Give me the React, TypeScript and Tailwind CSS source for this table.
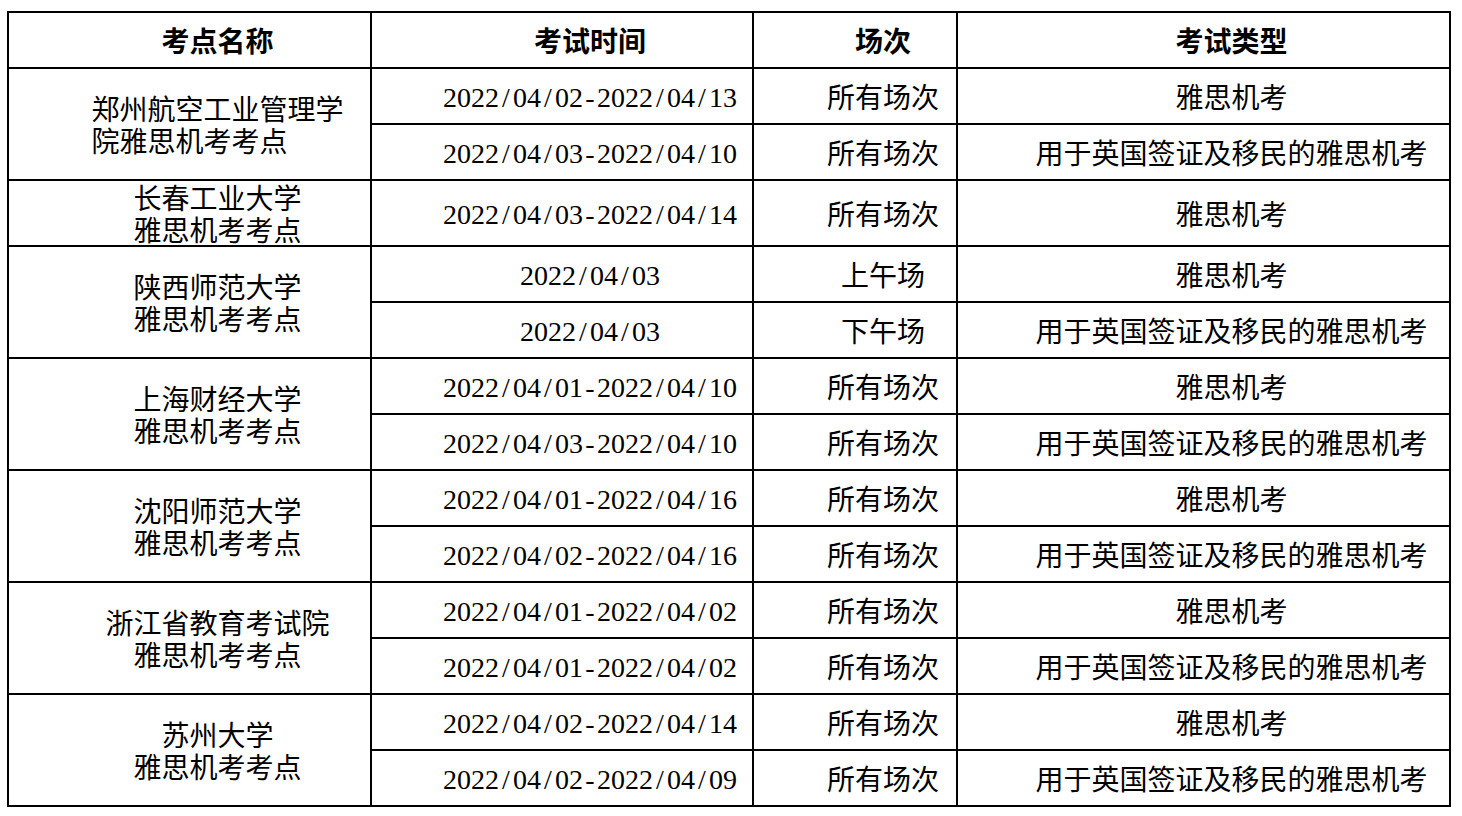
type Slot = { date: string; session: string; type: string };

interface Venue {
  name: string[];
  leftAligned?: boolean;
  tall?: boolean;
  slots: Slot[];
}

const VISA = '用于英国签证及移民的雅思机考';
const IELTS = '雅思机考';
const ALL = '所有场次';

const venues: Venue[] = [
  {
    name: ['郑州航空工业管理学', '院雅思机考考点'],
    leftAligned: true,
    slots: [
      { date: '2022/04/02-2022/04/13', session: ALL, type: IELTS },
      { date: '2022/04/03-2022/04/10', session: ALL, type: VISA },
    ],
  },
  {
    name: ['长春工业大学', '雅思机考考点'],
    tall: true,
    slots: [{ date: '2022/04/03-2022/04/14', session: ALL, type: IELTS }],
  },
  {
    name: ['陕西师范大学', '雅思机考考点'],
    slots: [
      { date: '2022/04/03', session: '上午场', type: IELTS },
      { date: '2022/04/03', session: '下午场', type: VISA },
    ],
  },
  {
    name: ['上海财经大学', '雅思机考考点'],
    slots: [
      { date: '2022/04/01-2022/04/10', session: ALL, type: IELTS },
      { date: '2022/04/03-2022/04/10', session: ALL, type: VISA },
    ],
  },
  {
    name: ['沈阳师范大学', '雅思机考考点'],
    slots: [
      { date: '2022/04/01-2022/04/16', session: ALL, type: IELTS },
      { date: '2022/04/02-2022/04/16', session: ALL, type: VISA },
    ],
  },
  {
    name: ['浙江省教育考试院', '雅思机考考点'],
    slots: [
      { date: '2022/04/01-2022/04/02', session: ALL, type: IELTS },
      { date: '2022/04/01-2022/04/02', session: ALL, type: VISA },
    ],
  },
  {
    name: ['苏州大学', '雅思机考考点'],
    slots: [
      { date: '2022/04/02-2022/04/14', session: ALL, type: IELTS },
      { date: '2022/04/02-2022/04/09', session: ALL, type: VISA },
    ],
  },
];

// half-width glyphs laid out on a fixed pitch, like the original document font
function MonoText({ text }: { text: string }) {
  return (
    <span className="inline-block whitespace-nowrap font-['Liberation_Serif',serif] text-[28px]">
      {text.split('').map((ch, i) => (
        <span key={i} className="inline-block w-[14px] text-center">
          {ch}
        </span>
      ))}
    </span>
  );
}

const cell = 'border-2 border-black pl-[56px] pr-0 text-center align-middle';

export default function App() {
  return (
    <div className="min-h-screen bg-white pt-[11px] pl-[7px] font-['Noto_Sans_CJK_SC',sans-serif] text-[28px] leading-8 text-black">
      <table className="w-[1444px] table-fixed border-collapse">
        <colgroup>
          <col className="w-[363px]" />
          <col className="w-[382px]" />
          <col className="w-[204px]" />
          <col className="w-[493px]" />
        </colgroup>
        <thead>
          <tr className="h-[56px]">
            <th className={`${cell} font-bold`}>考点名称</th>
            <th className={`${cell} font-bold`}>考试时间</th>
            <th className={`${cell} font-bold`}>场次</th>
            <th className={`${cell} font-bold`}>考试类型</th>
          </tr>
        </thead>
        <tbody>
          {venues.map((v) =>
            v.slots.map((s, i) => (
              <tr key={v.name.join('') + i} className={v.tall ? 'h-[66px]' : 'h-[56px]'}>
                {i === 0 && (
                  <td rowSpan={v.slots.length} className={`${cell} font-normal`}>
                    <div className={v.leftAligned ? 'inline-block text-left' : 'inline-block'}>
                      {v.name.map((line) => (
                        <div key={line} className="whitespace-nowrap">
                          {line}
                        </div>
                      ))}
                    </div>
                  </td>
                )}
                <td className={cell}>
                  <MonoText text={s.date} />
                </td>
                <td className={`${cell} whitespace-nowrap`}>{s.session}</td>
                <td className={`${cell} whitespace-nowrap`}>{s.type}</td>
              </tr>
            )),
          )}
        </tbody>
      </table>
    </div>
  );
}
